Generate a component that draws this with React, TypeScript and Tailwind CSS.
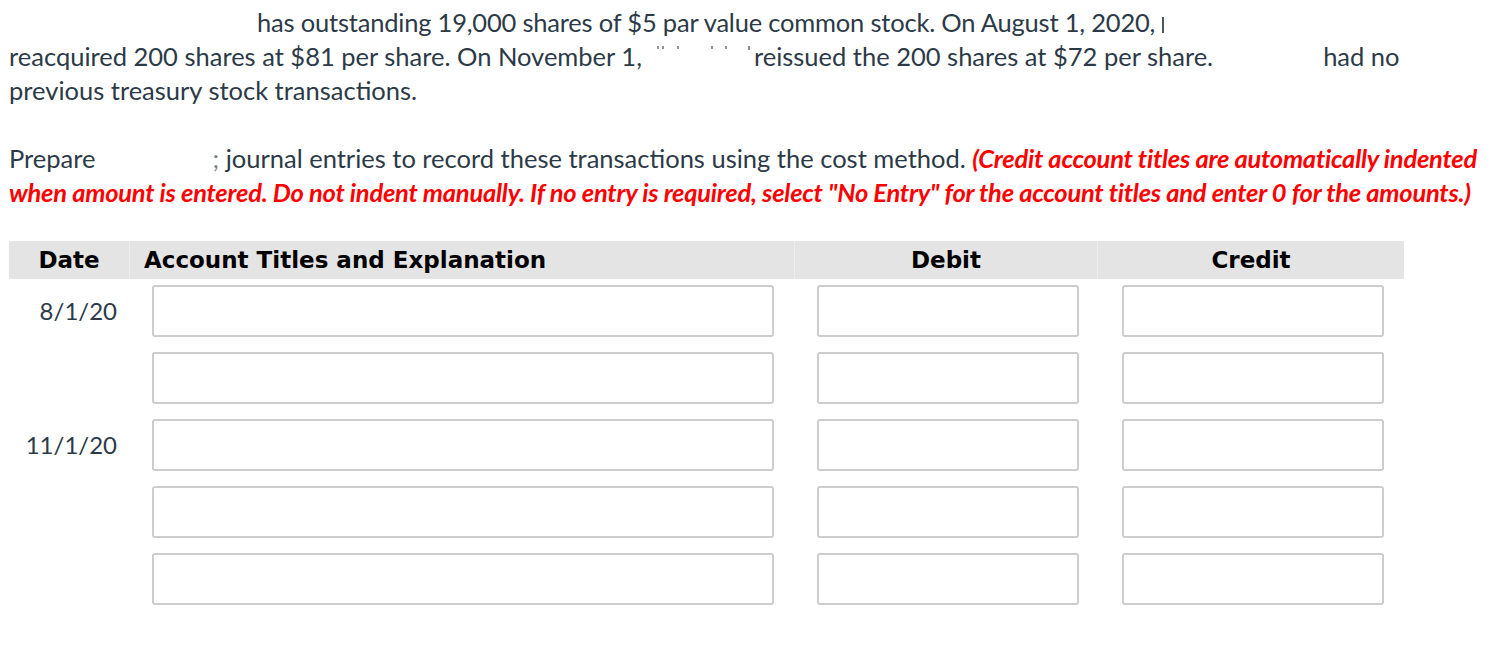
import React from "react";

const rows = [
  { date: "8/1/20" },
  { date: "" },
  { date: "11/1/20" },
  { date: "" },
  { date: "" },
];

function Box({ w }: { w: string }) {
  return (
    <div
      className={`h-[52px] ${w} rounded-[3px] border-2 border-[#cdcdcd] bg-white`}
    />
  );
}

export default function App() {
  return (
    <div className="min-h-[647px] w-[1510px] bg-white pl-[9px] pt-[5px] font-['Lato',sans-serif] text-[25.5px] leading-[34px] text-[#2c3a48]">
      <p className="w-[1480px] whitespace-nowrap">
        <span className="inline-block w-[248px]" />
        <span className="tracking-[-0.2px]">has outstanding 19,000 shares of $5 par value common stock. On August 1, 2020,</span>{" "}
        <span className="inline-block h-[16px] w-[2px] bg-[#4a5866] align-[-1px]" />
        <br />
        reacquired 200 shares at $81 per share. On November 1,
        <span className="relative inline-block h-[20px] w-[112px]">
          <span className="absolute left-[15px] top-0 h-[3px] w-[2px] bg-[#8a939c]" />
          <span className="absolute left-[20px] top-0 h-[3px] w-[2px] bg-[#8a939c]" />
          <span className="absolute left-[35px] top-0 h-[3px] w-[2px] bg-[#8a939c]" />
          <span className="absolute left-[69px] top-0 h-[3px] w-[2px] bg-[#8a939c]" />
          <span className="absolute left-[83px] top-0 h-[3px] w-[2px] bg-[#8a939c]" />
          <span className="absolute left-[106px] top-0 h-[4px] w-[2px] bg-[#8a939c]" />
        </span>
        reissued the 200 shares at $72 per share.
        <span className="inline-block w-[110px]" />
        had no
        <br />
        previous treasury stock transactions.
      </p>
      <p className="mt-[34px] w-[1495px] whitespace-nowrap">
        Prepare
        <span className="inline-block w-[117px]" />
        <span className="text-[#7a8591]">;</span> journal entries to record these transactions using the cost method.{" "}
        <span className="font-bold italic tracking-[-0.25px] text-[#ff0000]">
          (Credit account titles are automatically indented
          <br />
          when amount is entered. Do not indent manually. If no entry is required, select "No Entry" for the account titles and enter 0 for the amounts.)
        </span>
      </p>

      <div className="mt-[32px] w-[1395px]">
        <div className="flex h-[38px] items-center bg-[#e4e4e4] font-['DejaVu_Sans',sans-serif] text-[23px] font-bold leading-none text-black">
          <div className="flex h-full w-[121px] items-center justify-center border-r border-[#eeeeee]">Date</div>
          <div className="flex h-full w-[665px] items-center border-r border-[#eeeeee] pl-[14px]">Account Titles and Explanation</div>
          <div className="flex h-full w-[303px] items-center justify-center border-r border-[#eeeeee]">Debit</div>
          <div className="flex h-full w-[306px] items-center justify-center">Credit</div>
        </div>
        <div className="flex flex-col gap-[15px] pt-[6px] text-[24px]">
          {rows.map((r, i) => (
            <div key={i} className="flex items-center">
              <div className="w-[121px] pr-[13px] text-right">{r.date}</div>
              <div className="w-[665px] pl-[22px]">
                <Box w="w-[622px]" />
              </div>
              <div className="w-[303px] pl-[22px]">
                <Box w="w-[262px]" />
              </div>
              <div className="w-[306px] pl-[24px]">
                <Box w="w-[262px]" />
              </div>
            </div>
          ))}
        </div>
      </div>
    </div>
  );
}
